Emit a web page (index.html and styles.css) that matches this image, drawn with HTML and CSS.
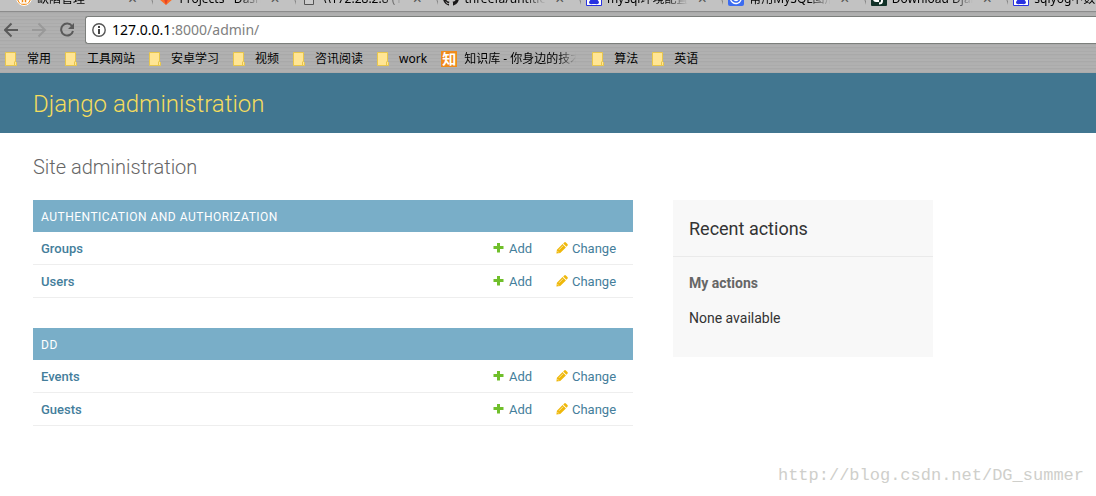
FILE: index.html
```html
<!DOCTYPE html>
<html lang="en">
<head>
<meta charset="utf-8">
<title>Site administration | Django site admin</title>
<link rel="stylesheet" href="styles.css">
</head>
<body>
<svg class="defs" width="0" height="0" aria-hidden="true">
  <symbol id="plus" viewBox="0 0 12 12"><path fill="#70bf2b" d="M4 1h3v3h3.500v3H7v3.500H4V7H.5V4H4z"/></symbol>
  <symbol id="pencil" viewBox="0 0 12 12"><path fill="#efb80b" d="M8.200.5a1.200 1.200 0 0 1 1.700 0l1.500 1.500a1.200 1.200 0 0 1 0 1.700l-1 1-3.200-3.200zM6.600 2.100 9.900 5.400 4.200 11 .4 11.500.900 7.800z"/><path stroke="#fff" stroke-width=".6" d="m3 7.800 4.200-4.200M1.500 9.200l1.300 1.300"/></symbol>
  <symbol id="folder" viewBox="0 0 12 14"><path fill="#ffe594" stroke="#e8c64c" d="M.5.500h10v9l1 1v3H.5z"/><path fill="none" stroke="#e8c64c" d="M9.500 13v-3l1-1"/></symbol>
  <symbol id="paw" viewBox="0 0 16 16"><path fill="#fff" stroke="#2932e1" d="M.5.500h15v15H.5z"/><path fill="#2932e1" d="M5 9c1-2 5-2 6 0l2 3c0 3-3 2-5 2s-5 1-5-2zM3 5h2v3H3zm8 0h2v3h-2zM5 2h2v3H5zm4 0h2v3H9z"/></symbol>
</svg>

<div class="browser">
  <div class="tabs">
    <div class="tab"><svg class="favicon" viewBox="0 0 16 16"><circle cx="8" cy="8" r="7.500" fill="#f28a12" stroke="#fff"/><path stroke="#fff" stroke-width="1.500" fill="none" d="M5 12V8m3 5V6m3 6V8M3 10l2 3h6l2-3"/></svg><span class="tab-title">缺陷管理</span><button class="close" aria-label="Close tab">✕</button></div>
    <div class="tab"><svg class="favicon" viewBox="0 0 16 16"><path fill="#fc6d26" d="m8 15-7-6L3 1l2 5h6l2-5 2 8z"/><path fill="#e24329" d="m8 15-3-9h6z"/></svg><span class="tab-title">Projects · Dashboard</span><button class="close" aria-label="Close tab">✕</button></div>
    <div class="tab"><svg class="favicon" viewBox="0 0 16 16"><path fill="#ccc" stroke="#555" d="M3.500.500h9v14h-9z"/></svg><span class="tab-title">\\172.28.2.8 (172</span><button class="close" aria-label="Close tab">✕</button></div>
    <div class="tab"><svg class="favicon" viewBox="0 0 16 16"><path fill="#191717" d="M8 0a8 8 0 0 0-2.500 15.600c.4 0 .5-.2.500-.4v-1.500c-2 .5-2.700-.8-3-1.500-.3-.5-.8-.9-1-1 1.200-.2 1.800 1.300 2.400 1.600.6.300 1.300.2 1.700 0 0-.5.200-.8.400-1C4 11.500 3 10 3 8c0-1 .2-1.600.8-2.200 0-.3-.2-1 .1-2 1 0 1.900.8 2.100.9a8 8 0 0 1 4 0c.2-.1 1-.9 2.100-.9.300 1 .1 1.700 0 2C12.800 6.400 13 7 13 8c0 2-1 3.500-3.500 3.800.4.300.5.800.5 1.400v2c0 .2.100.4.500.4A8 8 0 0 0 8 0"/></svg><span class="tab-title">threefa/untitled</span><button class="close" aria-label="Close tab">✕</button></div>
    <div class="tab"><svg class="favicon"><use href="#paw"/></svg><span class="tab-title">mysql环境配置</span><button class="close" aria-label="Close tab">✕</button></div>
    <div class="tab"><svg class="favicon" viewBox="0 0 16 16"><rect width="16" height="16" rx="2" fill="#3c6cf0"/><path fill="none" stroke="#fff" stroke-width="1.300" d="M13 10a5.500 5.500 0 1 1 0-4M10.500 8a2.500 2.500 0 1 1-2.500-2.500V8h5"/></svg><span class="tab-title">常用MySQL图形</span><button class="close" aria-label="Close tab">✕</button></div>
    <div class="tab"><svg class="favicon" viewBox="0 0 16 16"><rect width="16" height="16" rx="1" fill="#113228"/><path fill="none" stroke="#fff" stroke-width="2" d="M7 4v7H5a2 2 0 0 1 0-4h2m4-1v5q0 2.500-3 2.500"/></svg><span class="tab-title">Download Django</span><button class="close" aria-label="Close tab">✕</button></div>
    <div class="tab"><svg class="favicon"><use href="#paw"/></svg><span class="tab-title">sqlyog中数据</span></div>
  </div>
  <div class="toolbar">
    <button class="nav" aria-label="Back"><svg width="16" height="16" viewBox="0 0 16 16"><path fill="none" stroke="#5a5a5a" stroke-width="2" d="M14 8H1m6.500-6.500L1 8l6.500 6.500"/></svg></button>
    <button class="nav" aria-label="Forward"><svg width="16" height="16" viewBox="0 0 16 16"><path fill="none" stroke="#999" stroke-width="2" d="M0 8h13M6.500 1.500 13 8l-6.500 6.500"/></svg></button>
    <button class="nav" aria-label="Reload"><svg width="16" height="16" viewBox="0 0 16 16"><path fill="none" stroke="#5a5a5a" stroke-width="2" d="M12 4A6 6 0 1 0 13 9"/><path fill="#5a5a5a" d="M14 1v6H8z"/></svg></button>
    <div class="omnibox">
      <svg width="14" height="14" viewBox="0 0 14 14"><circle cx="7" cy="7" r="6.200" fill="none" stroke="#555" stroke-width="1.400"/><path stroke="#444" stroke-width="2" d="M7 3v2m0 1v5"/></svg>
      <div class="url" role="textbox" contenteditable="true" aria-label="Address">127.0.0.1<span class="path">:8000/admin/</span></div>
    </div>
  </div>
  <nav class="bookmarks">
    <a href="#"><svg class="folder"><use href="#folder"/></svg>常用</a>
    <a href="#"><svg class="folder"><use href="#folder"/></svg>工具网站</a>
    <a href="#"><svg class="folder"><use href="#folder"/></svg>安卓学习</a>
    <a href="#"><svg class="folder"><use href="#folder"/></svg>视频</a>
    <a href="#"><svg class="folder"><use href="#folder"/></svg>咨讯阅读</a>
    <a href="#"><svg class="folder"><use href="#folder"/></svg>work</a>
    <a href="#" class="site"><span class="zhi">知</span><span class="fade">知识库 - 你身边的技术</span></a>
    <a href="#"><svg class="folder"><use href="#folder"/></svg>算法</a>
    <a href="#"><svg class="folder"><use href="#folder"/></svg>英语</a>
  </nav>
</div>

<header class="header"><a href="#">Django administration</a></header>

<main class="content">
  <h1>Site administration</h1>
  <div class="columns">
    <div class="modules">
      <table>
        <caption><a href="#">Authentication and Authorization</a></caption>
        <tr><th scope="row"><a href="#">Groups</a></th><td class="add"><a href="#"><svg><use href="#plus"/></svg>Add</a></td><td class="change"><a href="#"><svg><use href="#pencil"/></svg>Change</a></td></tr>
        <tr><th scope="row"><a href="#">Users</a></th><td class="add"><a href="#"><svg><use href="#plus"/></svg>Add</a></td><td class="change"><a href="#"><svg><use href="#pencil"/></svg>Change</a></td></tr>
      </table>
      <table>
        <caption><a href="#">DD</a></caption>
        <tr><th scope="row"><a href="#">Events</a></th><td class="add"><a href="#"><svg><use href="#plus"/></svg>Add</a></td><td class="change"><a href="#"><svg><use href="#pencil"/></svg>Change</a></td></tr>
        <tr><th scope="row"><a href="#">Guests</a></th><td class="add"><a href="#"><svg><use href="#plus"/></svg>Add</a></td><td class="change"><a href="#"><svg><use href="#pencil"/></svg>Change</a></td></tr>
      </table>
    </div>
    <aside class="recent">
      <h2>Recent actions</h2>
      <h3>My actions</h3>
      <p>None available</p>
    </aside>
  </div>
</main>
<footer class="watermark">http://blog.csdn.net/DG_summer</footer>
</body>
</html>
```
FILE: styles.css
```css
* { box-sizing: border-box; }

body {
  margin: 0;
  min-height: 100vh;
  display: flex;
  flex-direction: column;
  background: #fff;
  color: #333;
  font: 14px/20px Roboto, "Noto Sans CJK SC", sans-serif;
}

a { color: #447e9b; text-decoration: none; }
button { padding: 0; border: 0; background: none; }
.defs { position: absolute; }

/* Browser frame */
.browser {
  color: #000;
  font: 12px/16px "Noto Sans", "Noto Sans CJK SC", sans-serif;
  background: repeating-linear-gradient(#b0b0b0 0 2px, #ababab 2px 3px, #b1b1b1 3px 5px, #a9a9a9 5px 6px, #aeaeae 6px 7px);
}

.tabs {
  display: flex;
  height: 12px;
  padding-left: 11px;
  overflow: hidden;
  background: #c2c2c2;
  border-bottom: 1px solid #8c8c8c;
}

.tab {
  flex: 0 0 13vw;
  min-width: 0;
  display: flex;
  align-items: flex-end;
  align-self: flex-end;
  height: 24px;
  padding: 0 16px 4px 5px;
  gap: 5px;
  background: linear-gradient(72deg, transparent calc(100% - 6px), #858585 calc(100% - 5px), transparent calc(100% - 4px));
}

.favicon { flex: none; width: 16px; height: 16px; margin-bottom: 1px; }

.tab-title {
  flex: 1;
  min-width: 0;
  overflow: hidden;
  white-space: nowrap;
  mask-image: linear-gradient(90deg, #000 70%, transparent 95%);
}

.close { font: 12px/16px "DejaVu Sans", sans-serif; color: #555; }

.toolbar { display: flex; align-items: center; gap: 12px; padding: 4px 0 0 4px; }
.nav { display: flex; }

.omnibox {
  flex: 1;
  display: flex;
  align-items: center;
  gap: 6px;
  height: 28px;
  margin-left: -3px;
  padding-left: 6px;
  background: #fff;
  border: 1px solid #7c7f7c;
  border-right: 0;
  border-radius: 3px 0 0 3px;
}

.url { flex: 1; font-size: 14px; line-height: 20px; outline: 0; }
.path { color: #808080; }

.bookmarks { display: flex; align-items: center; gap: 14px; height: 29px; padding-left: 5px; }
.bookmarks a { display: flex; align-items: center; gap: 10px; color: #000; white-space: nowrap; }
.folder { width: 12px; height: 14px; }
.bookmarks .site { gap: 7px; width: 137px; overflow: hidden; }
.zhi { flex: none; width: 16px; background: #ef8b1c; color: #fff; font-size: 14px; font-weight: 700; text-align: center; }
.fade { mask-image: linear-gradient(90deg, #000 80%, transparent 95%); }

/* Admin */
.header { padding: 16px 33px 14px; background: #417690; font-size: 24px; font-weight: 300; line-height: 30px; }
.header a { color: #f5dd5d; }

.content { flex: 1; padding: 22px 33px 0; }
h1 { margin: 0 0 21px; color: #666; font-size: 20px; font-weight: 300; line-height: 24px; }

.columns { display: flex; align-items: flex-start; gap: 40px; }
.modules { flex: 0 1 600px; }

table { width: 100%; margin-bottom: 30px; border-collapse: collapse; font-size: 13px; line-height: 16px; }
caption { padding: 9px 8px 7px; background: #79aec8; font-size: 12px; font-weight: 400; text-align: left; text-transform: uppercase; letter-spacing: 0.5px; }
caption a { color: #fff; }
th, td { padding: 9px 8px 7px; border-bottom: 1px solid #eee; text-align: left; font-weight: 400; }
th a { font-weight: 500; }
td a { display: flex; align-items: center; gap: 4px; }
td svg { width: 12px; height: 12px; margin-bottom: 2px; }
.add { width: 63px; }
.change { width: 85px; }

.recent { flex: 0 1 260px; padding-bottom: 14px; background: #f8f8f8; }
h2 { margin: 0; padding: 17px 16px 15px; border-bottom: 1px solid #eaeaea; font-size: 18px; font-weight: 400; line-height: 24px; }
h3 { margin: 16px 16px 0; color: #666; font-size: 14px; font-weight: 700; line-height: 20px; }
.recent p { margin: 15px 16px; }

.watermark {
  padding: 0 12px 10px;
  color: #cfcfcb;
  text-align: right;
  font: 17px/20px "Liberation Mono", monospace;
}
```
